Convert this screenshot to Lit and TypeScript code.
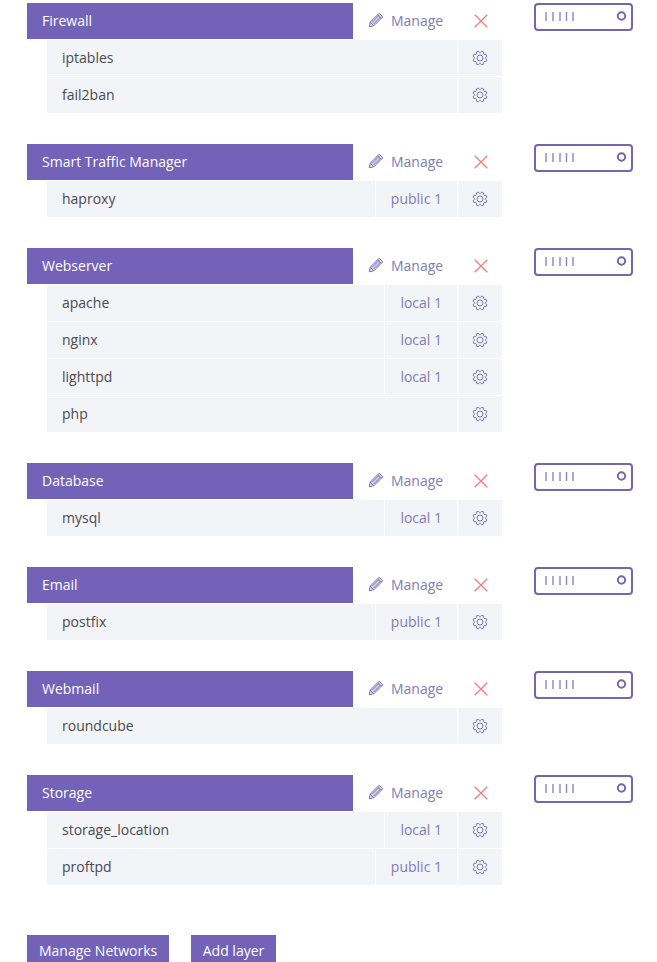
import {css, html, LitElement} from 'lit';
import {customElement} from 'lit/decorators.js';

type Service = {name: string; net?: string};
type Layer = {name: string; services: Service[]};

const LAYERS: Layer[] = [
  {name: 'Firewall', services: [{name: 'iptables'}, {name: 'fail2ban'}]},
  {name: 'Smart Traffic Manager', services: [{name: 'haproxy', net: 'public 1'}]},
  {
    name: 'Webserver',
    services: [
      {name: 'apache', net: 'local 1'},
      {name: 'nginx', net: 'local 1'},
      {name: 'lighttpd', net: 'local 1'},
      {name: 'php'},
    ],
  },
  {name: 'Database', services: [{name: 'mysql', net: 'local 1'}]},
  {name: 'Email', services: [{name: 'postfix', net: 'public 1'}]},
  {name: 'Webmail', services: [{name: 'roundcube'}]},
  {
    name: 'Storage',
    services: [
      {name: 'storage_location', net: 'local 1'},
      {name: 'proftpd', net: 'public 1'},
    ],
  },
];

// scalloped outline: eight soft teeth around the centre
const gearPath = () => {
  const pts: string[] = [];
  for (let i = 0; i < 8; i++) {
    const a = (i * Math.PI) / 4 + Math.PI / 8;
    const step = Math.PI / 11;
    const p = (r: number, t: number) =>
      `${(8 + r * Math.cos(t)).toFixed(2)} ${(8 + r * Math.sin(t)).toFixed(2)}`;
    pts.push(`${i ? 'L' : 'M'}${p(5.4, a - step * 1.1)} L${p(7.1, a - step * 0.55)} L${p(7.1, a + step * 0.55)} L${p(5.4, a + step * 1.1)}`);
  }
  return pts.join(' ') + ' Z';
};

const gear = html`<svg class="gear" viewBox="0 0 16 16" width="16" height="16">
  <path d=${gearPath()}></path>
  <circle cx="8" cy="8" r="3"></circle>
</svg>`;

const pencil = html`<svg class="pencil" viewBox="0 0 16 16" width="16" height="16">
  <path d="M1.2 14.8 L2.2 10.2 L11.2 1.2 L14.8 4.8 L5.8 13.8 Z"></path>
  <path d="M2.2 10.2 L5.8 13.8 M9.6 2.8 L13.2 6.4 M4 10.4 L11.2 3.2 M5.6 12 L12.8 4.8"></path>
</svg>`;

const cross = html`<svg class="cross" viewBox="0 0 14 14" width="14" height="14">
  <path d="M0.7 0.7 L13.3 13.3 M13.3 0.7 L0.7 13.3"></path>
</svg>`;

const server = html`<svg class="server" viewBox="0 0 99 28" width="99" height="28">
  <rect x="1" y="1" width="97" height="26" rx="3"></rect>
  <path d="M12 9 V18 M19 9 V18 M26 9 V18 M32.5 9 V18 M39 9 V18"></path>
  <circle cx="87.5" cy="13" r="3.7"></circle>
</svg>`;

@customElement('app-root')
export class AppRoot extends LitElement {
  static styles = css`
    :host {
      display: block;
      height: 962px;
      overflow: hidden;
      background: #fff;
      font-family: 'Open Sans', sans-serif;
      font-size: 14px;
      color: #4a4a50;
    }
    .page {
      padding: 3px 0 0 27px;
    }
    .layer {
      display: flex;
      align-items: flex-start;
      margin-bottom: 31px;
    }
    .main {
      width: 475px;
    }
    .head {
      display: flex;
      align-items: center;
      height: 36px;
    }
    .title {
      width: 326px;
      height: 36px;
      box-sizing: border-box;
      padding-left: 15px;
      line-height: 35px;
      background: #7262b8;
      color: #fff;
    }
    .manage {
      display: flex;
      align-items: center;
      gap: 7px;
      margin-left: 15px;
      padding-bottom: 2px;
      width: 91px;
      color: #837cb2;
    }
    .cross {
      margin-left: 15px;
      fill: none;
      stroke: #ee7d7d;
      stroke-width: 1.3;
    }
    .pencil {
      fill: #d9d6ec;
      stroke: #7f77b4;
      stroke-width: 1;
    }
    .row {
      display: flex;
      height: 36px;
      margin: 1px 0 0 20px;
      gap: 1px;
    }
    .cell {
      background: #f2f4f8;
      line-height: 35px;
    }
    .name {
      flex: 1;
      padding-left: 15px;
    }
    .net {
      padding: 0 15px;
      color: #837cb2;
    }
    .cog {
      display: flex;
      align-items: center;
      justify-content: center;
      width: 44px;
    }
    .gear {
      fill: none;
      stroke: #8178ba;
      stroke-width: 1;
      stroke-linejoin: round;
    }
    .server {
      display: block;
      margin-left: 32px;
      fill: none;
      stroke: #7565ac;
      stroke-width: 2;
    }
    .server path {
      stroke-width: 1.4;
      stroke: #8d84bd;
    }
    .actions {
      display: flex;
      gap: 22px;
      margin-top: 50px;
    }
    button {
      height: 36px;
      padding: 0 12px 6px;
      border: 0;
      background: #7262b8;
      color: #fff;
      font: inherit;
    }
    button.small {
      padding: 0 11.5px 6px;
    }
  `;

  render() {
    return html`
      <div class="page">
        ${LAYERS.map(
          (l) => html`
            <section class="layer">
              <div class="main">
                <div class="head">
                  <div class="title">${l.name}</div>
                  <div class="manage">${pencil}<span>Manage</span></div>
                  ${cross}
                </div>
                ${l.services.map(
                  (s) => html`
                    <div class="row">
                      <div class="cell name">${s.name}</div>
                      ${s.net ? html`<div class="cell net">${s.net}</div>` : ''}
                      <div class="cell cog">${gear}</div>
                    </div>
                  `
                )}
              </div>
              ${server}
            </section>
          `
        )}
        <div class="actions">
          <button>Manage Networks</button>
          <button class="small">Add layer</button>
        </div>
      </div>
    `;
  }
}
